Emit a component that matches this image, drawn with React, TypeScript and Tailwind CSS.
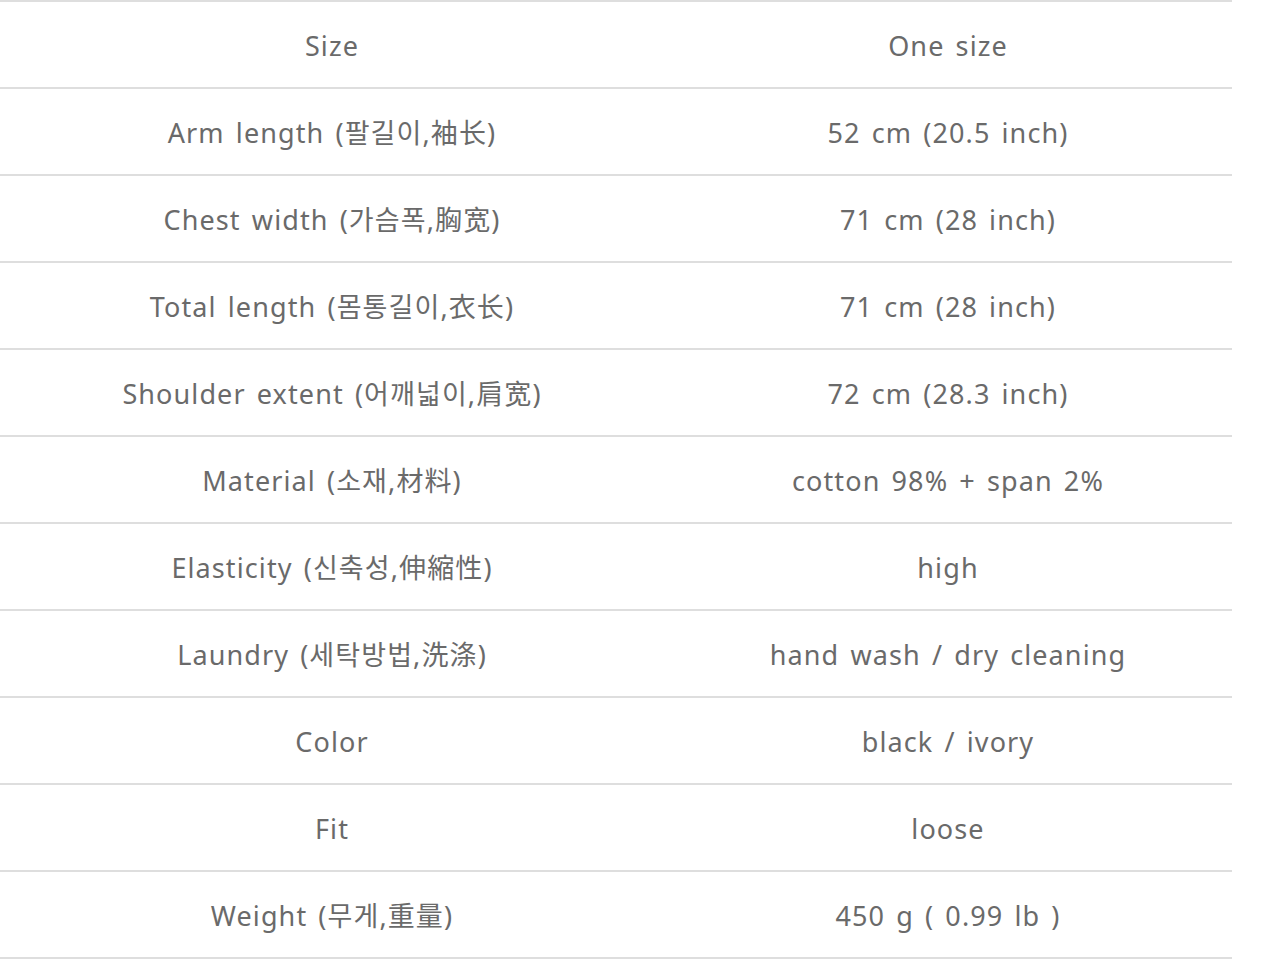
const ROWS: [string, string][] = [
  ["Size", "One size"],
  ["Arm length (팔길이,袖长)", "52 cm (20.5 inch)"],
  ["Chest width (가슴폭,胸宽)", "71 cm (28 inch)"],
  ["Total length (몸통길이,衣长)", "71 cm (28 inch)"],
  ["Shoulder extent (어깨넓이,肩宽)", "72 cm (28.3 inch)"],
  ["Material (소재,材料)", "cotton 98% + span 2%"],
  ["Elasticity (신축성,伸縮性)", "high"],
  ["Laundry (세탁방법,洗涤)", "hand wash / dry cleaning"],
  ["Color", "black / ivory"],
  ["Fit", "loose"],
  ["Weight (무게,重量)", "450 g ( 0.99 lb )"],
];

export default function App() {
  return (
    <div className="bg-white w-[1280px] h-[962px]">
      <table
        className="w-[1232px] border-collapse text-[27px] text-[#6a6a6a]"
        style={{ fontFamily: '"Noto Sans", "Noto Sans CJK KR", sans-serif' }}
      >
        <tbody>
          {ROWS.map(([label, value]) => (
            <tr key={label} className="h-[87px] border-y-[2px] border-[#dedede]">
              <td className="w-[664px] pt-[4px] text-center align-middle tracking-[1.1px] [word-spacing:3px]">{label}</td>
              <td className="pt-[4px] text-center align-middle tracking-[1.1px] [word-spacing:3px]">{value}</td>
            </tr>
          ))}
        </tbody>
      </table>
    </div>
  );
}
